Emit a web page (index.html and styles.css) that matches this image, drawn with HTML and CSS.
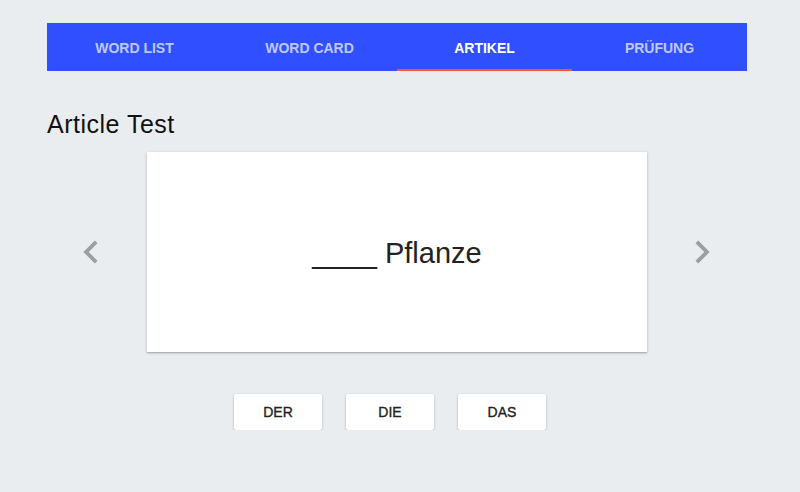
FILE: index.html
```html
<!DOCTYPE html>
<html>
<head>
<meta charset="utf-8">
<link rel="stylesheet" href="styles.css">
</head>
<body>
<div class="page">
  <nav class="tabs">
    <div class="tab">WORD LIST</div>
    <div class="tab">WORD CARD</div>
    <div class="tab active">ARTIKEL</div>
    <div class="tab">PRÜFUNG</div>
  </nav>
  <h1 class="title">Article Test</h1>
  <div class="stage">
    <div class="arrow left">
      <svg viewBox="0 0 24 24"><path d="M15.41 7.41L14 6l-6 6 6 6 1.41-1.41L10.83 12z" fill="#9e9e9e"/></svg>
    </div>
    <div class="card">
      <span class="word">____ Pflanze</span>
    </div>
    <div class="arrow right">
      <svg viewBox="0 0 24 24"><path d="M10 6L8.59 7.41 13.17 12l-4.58 4.59L10 18l6-6z" fill="#9e9e9e"/></svg>
    </div>
  </div>
  <div class="choices">
    <button class="choice">DER</button>
    <button class="choice">DIE</button>
    <button class="choice">DAS</button>
  </div>
</div>
</body>
</html>
```

FILE: styles.css
```css
html, body {
  margin: 0;
  padding: 0;
  background: #eaedf0;
  font-family: "Liberation Sans", Arial, sans-serif;
}
.page {
  width: 700px;
  padding: 23px 0 0 47px;
}
.tabs {
  display: flex;
  height: 48px;
  background: #304ffe;
}
.tab {
  flex: 1;
  display: flex;
  align-items: center;
  justify-content: center;
  font-size: 14px;
  font-weight: bold;
  color: rgba(255,255,255,0.7);
  box-sizing: border-box;
  padding-top: 1px;
}
.tab.active {
  color: #fff;
  border-bottom: 2px solid #ff5722;
  padding-top: 3px;
}
.title {
  margin: 38px 0 0 0;
  font-size: 25px;
  letter-spacing: 0.5px;
  font-weight: normal;
  color: #111;
  line-height: 30px;
}
.stage {
  display: flex;
  align-items: center;
  margin-top: 13px;
}
.arrow {
  width: 100px;
  display: flex;
  align-items: center;
  box-sizing: border-box;
}
.arrow svg {
  width: 46px;
  height: 46px;
}
.arrow.left {
  padding-left: 21px;
}
.arrow.right {
  padding-left: 32px;
}
.card {
  width: 500px;
  height: 200px;
  background: #fff;
  box-shadow: 0 1px 3px rgba(0,0,0,0.2), 0 1px 1px rgba(0,0,0,0.14);
  display: flex;
  align-items: center;
  justify-content: center;
}
.word {
  font-size: 29px;
  color: #222;
  padding-top: 2px;
}
.choices {
  display: flex;
  gap: 24px;
  padding-left: 187px;
  margin-top: 42px;
}
.choice {
  width: 88px;
  height: 36px;
  border: none;
  background: #fff;
  border-radius: 2px;
  box-shadow: 0 1px 3px rgba(0,0,0,0.2), 0 1px 1px rgba(0,0,0,0.14);
  font-family: "Liberation Sans", Arial, sans-serif;
  font-size: 14px;
  font-weight: normal;
  -webkit-text-stroke: 0.35px #222;
  color: #222;
  padding: 0;
}
```
